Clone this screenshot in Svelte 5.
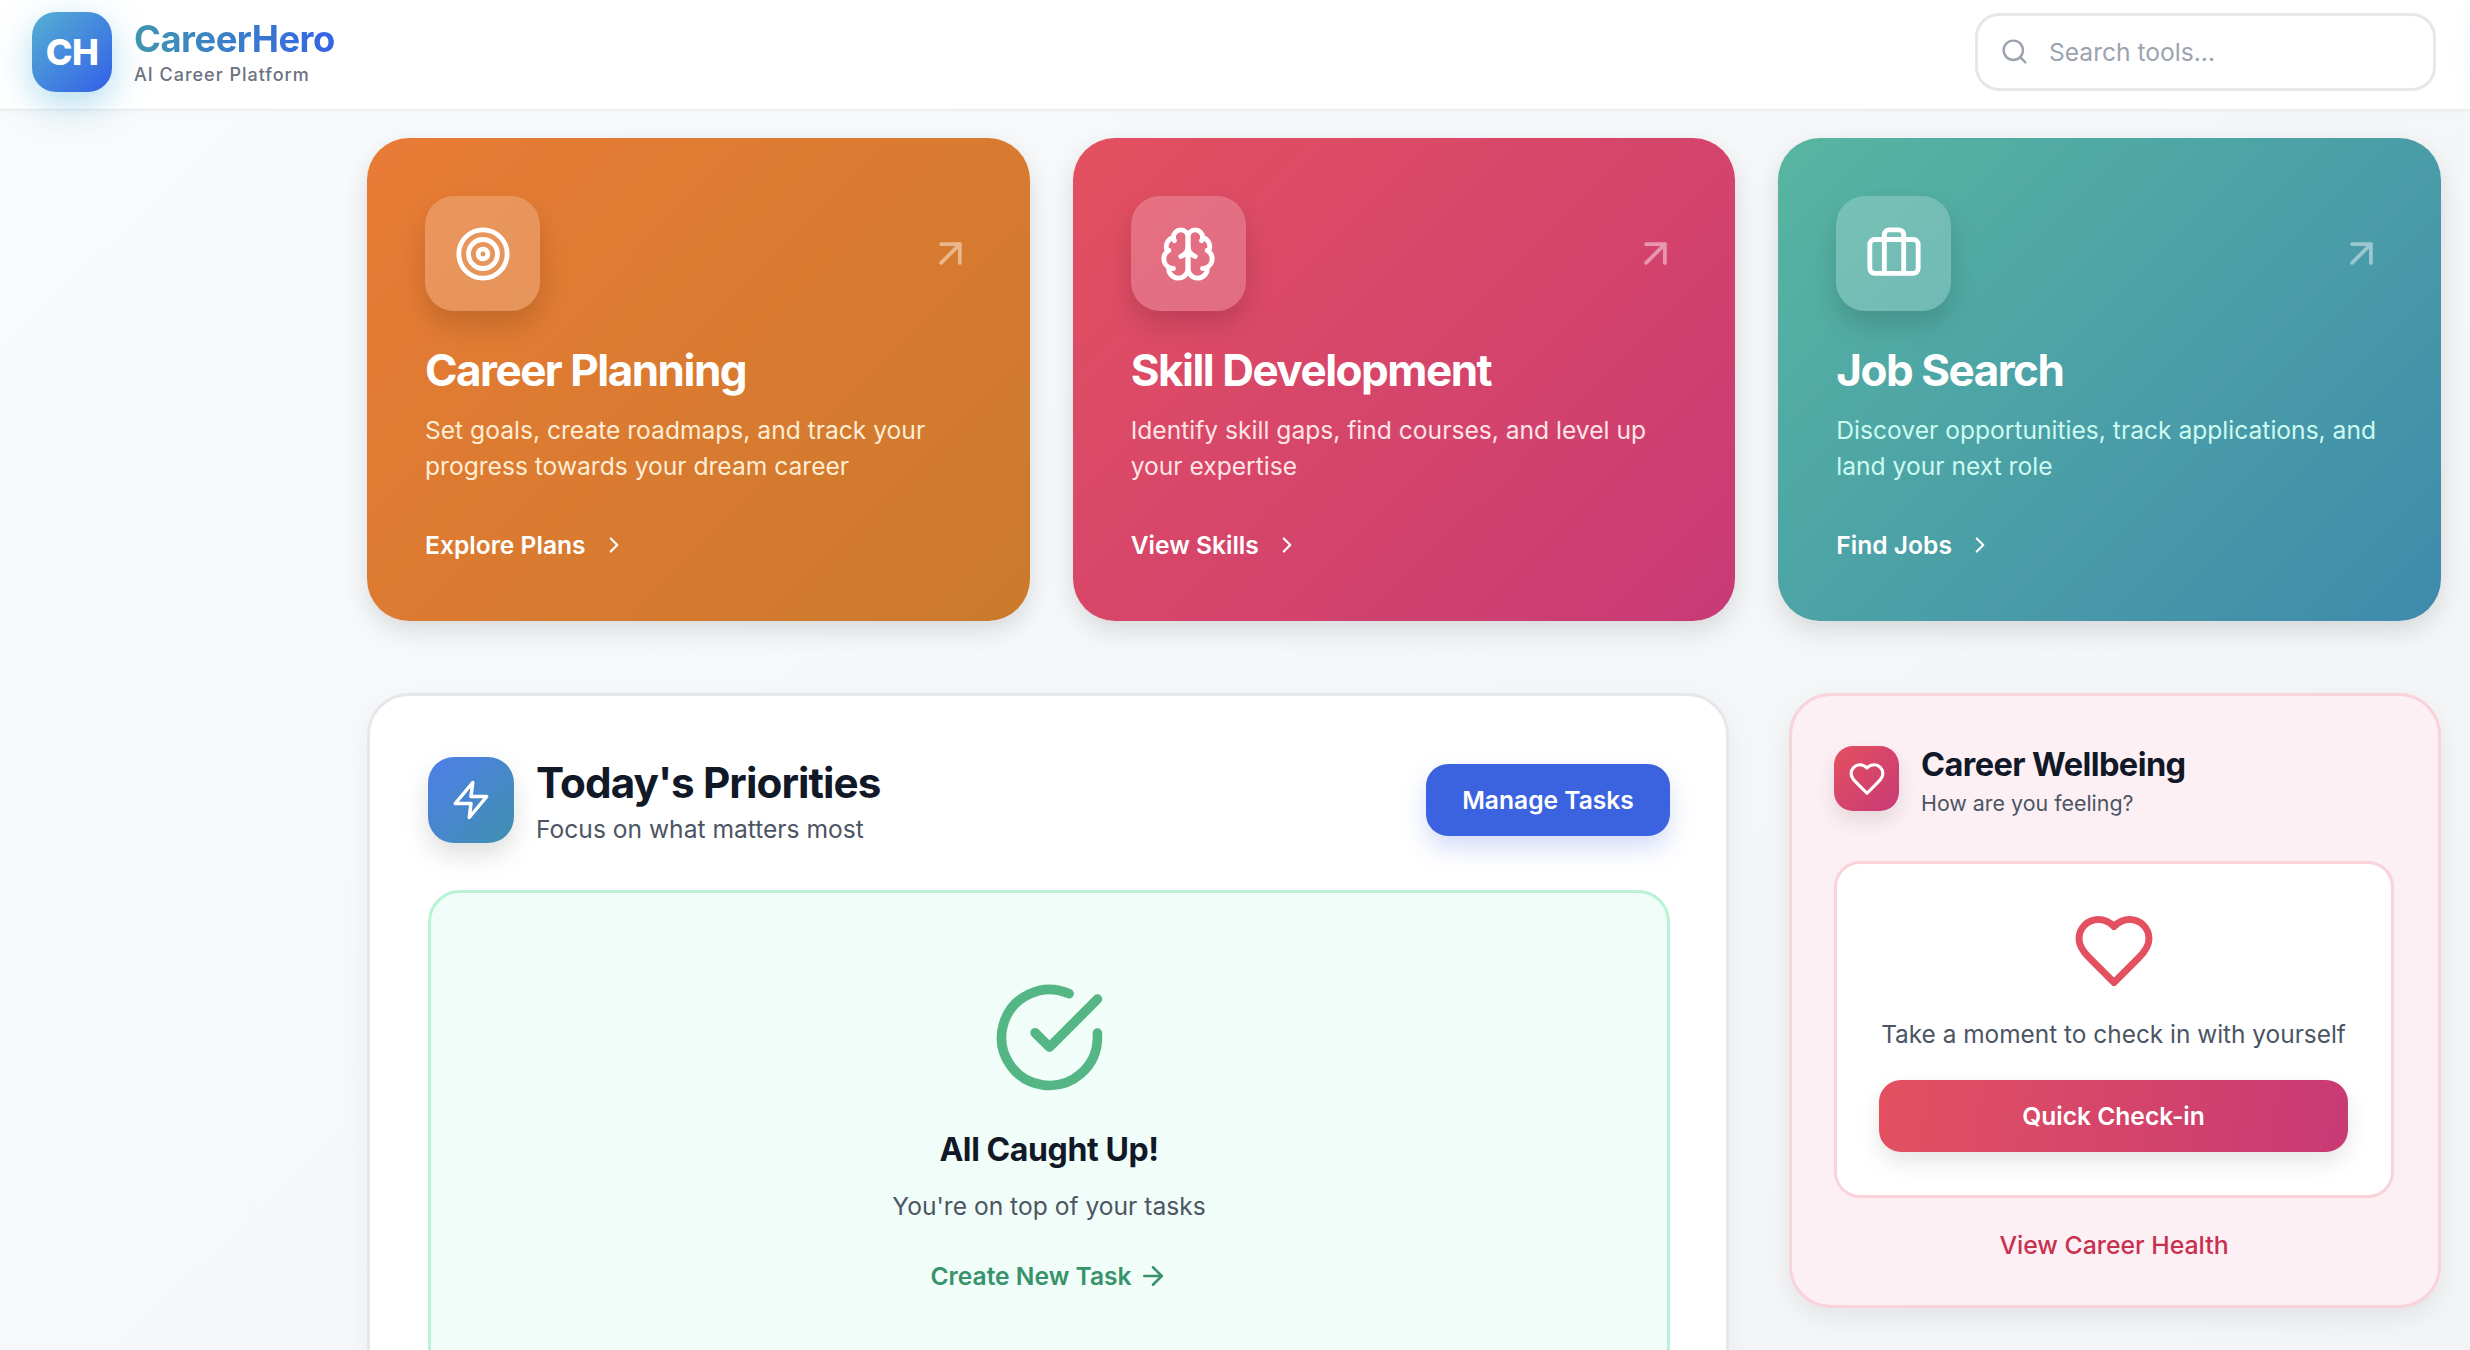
<script>
  const cards = [
    {
      cls: 'orange',
      title: 'Career Planning',
      text: 'Set goals, create roadmaps, and track your progress towards your dream career',
      link: 'Explore Plans',
      icon: '<circle cx="12" cy="12" r="10"/><circle cx="12" cy="12" r="6"/><circle cx="12" cy="12" r="2"/>'
    },
    {
      cls: 'pink',
      title: 'Skill Development',
      text: 'Identify skill gaps, find courses, and level up your expertise',
      link: 'View Skills',
      icon: '<path d="M12 5a3 3 0 1 0-5.997.125 4 4 0 0 0-2.526 5.77 4 4 0 0 0 .556 6.588A4 4 0 1 0 12 18Z"/><path d="M12 5a3 3 0 1 1 5.997.125 4 4 0 0 1 2.526 5.77 4 4 0 0 1-.556 6.588A4 4 0 1 1 12 18Z"/><path d="M15 13a4.5 4.5 0 0 1-3-4 4.5 4.5 0 0 1-3 4"/><path d="M17.599 6.5a3 3 0 0 0 .399-1.375"/><path d="M6.003 5.125A3 3 0 0 0 6.401 6.5"/><path d="M3.477 10.896a4 4 0 0 1 .585-.396"/><path d="M19.938 10.5a4 4 0 0 1 .585.396"/><path d="M6 18a4 4 0 0 1-1.967-.516"/><path d="M19.967 17.484A4 4 0 0 1 18 18"/>'
    },
    {
      cls: 'teal',
      title: 'Job Search',
      text: 'Discover opportunities, track applications, and land your next role',
      link: 'Find Jobs',
      icon: '<rect x="2" y="6" width="20" height="14" rx="2"/><path d="M16 20V4a2 2 0 0 0-2-2h-4a2 2 0 0 0-2 2v16"/>'
    }
  ];
  const heart = 'M19 14c1.49-1.46 3-3.21 3-5.5A5.5 5.5 0 0 0 16.5 3c-1.76 0-3 .5-4.5 2-1.5-1.5-2.74-2-4.5-2A5.5 5.5 0 0 0 2 8.5c0 2.3 1.5 4.05 3 5.5l7 7Z';
</script>

<div class="page">
  <header class="topbar">
    <div class="brand">
      <div class="logo">CH</div>
      <div>
        <div class="brand-name"><span>CareerHero</span></div>
        <div class="brand-sub">AI Career Platform</div>
      </div>
    </div>
    <div class="search">
      <svg width="29" height="29" viewBox="0 0 24 24"><circle cx="11" cy="11" r="8"/><path d="m21 21-4.3-4.3"/></svg>
      <input type="text" placeholder="Search tools..." />
    </div>
  </header>

  <main class="content">
    <section class="cards">
      {#each cards as card}
        <article class="card {card.cls}">
          <div class="card-top">
            <div class="card-icon">
              <svg width="58" height="58" viewBox="0 0 24 24">{@html card.icon}</svg>
            </div>
            <svg class="corner" width="45" height="45" viewBox="0 0 24 24"><path d="M7 7h10v10"/><path d="M7 17 17 7"/></svg>
          </div>
          <h2>{card.title}</h2>
          <p>{card.text}</p>
          <a class="card-link" href="#top">
            {card.link}
            <svg width="26" height="26" viewBox="0 0 24 24"><path d="m9 18 6-6-6-6"/></svg>
          </a>
        </article>
      {/each}
    </section>

    <section class="lower">
      <div class="panel">
        <div class="panel-head">
          <div class="panel-title">
            <div class="zap">
              <svg width="42" height="42" viewBox="0 0 24 24"><path d="M13 2 3 14h9l-1 8 10-12h-9l1-8z"/></svg>
            </div>
            <div>
              <h2>Today's Priorities</h2>
              <p>Focus on what matters most</p>
            </div>
          </div>
          <button class="manage">Manage Tasks</button>
        </div>
        <div class="done">
          <svg class="done-check" width="115" height="115" viewBox="0 0 24 24"><path d="M22 11.08V12a10 10 0 1 1-5.93-9.14"/><path d="M22 4 12 14.01l-3-3"/></svg>
          <h3>All Caught Up!</h3>
          <p>You're on top of your tasks</p>
          <a class="create" href="#top">
            Create New Task
            <svg width="30" height="30" viewBox="0 0 24 24"><path d="M5 12h14"/><path d="m12 5 7 7-7 7"/></svg>
          </a>
        </div>
      </div>

      <aside class="wellbeing">
        <div class="well-head">
          <div class="well-icon">
            <svg width="38" height="38" viewBox="0 0 24 24"><path d={heart}/></svg>
          </div>
          <div>
            <h3>Career Wellbeing</h3>
            <p>How are you feeling?</p>
          </div>
        </div>
        <div class="checkin">
          <svg class="big-heart" width="84" height="84" viewBox="0 0 24 24"><path d={heart}/></svg>
          <p>Take a moment to check in with yourself</p>
          <button class="quick">Quick Check-in</button>
        </div>
        <a class="health" href="#top">View Career Health</a>
      </aside>
    </section>
  </main>
</div>

<style>
  :global(body) {
    margin: 0;
    background: linear-gradient(135deg, #f9fafb, #f3f4f6);
    font-family: Inter, "Noto Sans", sans-serif;
    overflow: hidden;
  }
  svg {
    fill: none;
    stroke: currentColor;
    stroke-width: 2;
    stroke-linecap: round;
    stroke-linejoin: round;
    flex: none;
    display: block;
  }
  h2, h3, p {
    margin: 0;
  }
  a {
    text-decoration: none;
  }
  button {
    font-family: inherit;
    border: 0;
    color: #fff;
    font-size: 24.6px;
    font-weight: 600;
    height: 72px;
    border-radius: 22px;
  }

  .page {
    height: 1350px;
    overflow: hidden;
  }

  .topbar {
    position: relative;
    z-index: 2;
    display: flex;
    justify-content: space-between;
    align-items: center;
    height: 109px;
    padding: 0 34px 0 32px;
    background: #fff;
    border-bottom: 1px solid #e7e9ed;
    box-shadow: 0 1px 4px rgba(0, 0, 0, 0.04);
  }
  /* glow of something that sits past the right edge */
  .topbar::after {
    content: "";
    position: absolute;
    top: 14px;
    right: -72px;
    width: 60px;
    height: 80px;
    border-radius: 24px;
    box-shadow: 0 0 34px rgba(70, 175, 215, 0.2);
  }
  .brand {
    display: flex;
    align-items: center;
    gap: 22px;
    margin-top: -5px;
  }
  .logo {
    width: 80px;
    height: 80px;
    border-radius: 24px;
    display: flex;
    align-items: center;
    justify-content: center;
    color: #fff;
    font-size: 36px;
    font-weight: 800;
    letter-spacing: -0.5px;
    background: linear-gradient(135deg, #55b0d2, #3360e8);
    box-shadow: 0 12px 36px rgba(70, 175, 215, 0.42);
  }
  .brand-name {
    padding-top: 1px;
    font-size: 36.4px;
    font-weight: 700;
    line-height: 44px;
    letter-spacing: -0.5px;
  }
  .brand-sub {
    font-size: 18px;
    font-weight: 500;
    line-height: 26px;
    margin-top: 1px;
    letter-spacing: 1px;
    color: #6b7280;
  }
  .brand-name span {
    background: linear-gradient(100deg, #3f97ae, #3563e6);
    -webkit-background-clip: text;
    background-clip: text;
    color: transparent;
  }
  .search {
    display: flex;
    align-items: center;
    gap: 20px;
    width: 461px;
    height: 78px;
    box-sizing: border-box;
    padding: 0 22px;
    margin-top: -6px;
    background: #fff;
    border: 3px solid #e5e7eb;
    border-radius: 24px;
    color: #9ca3af;
  }
  .search input {
    flex: 1;
    min-width: 0;
    border: 0;
    outline: 0;
    padding: 0;
    font-family: inherit;
    font-size: 24.6px;
    color: #374151;
  }
  .search input::placeholder {
    color: #9ca3af;
    opacity: 1;
  }

  .content {
    padding: 28px 29px 0 367px;
  }
  .cards {
    display: grid;
    grid-template-columns: repeat(3, 1fr);
    gap: 43px;
  }
  .card {
    padding: 58px;
    border-radius: 42px;
    color: #fff;
    box-shadow: 0 10px 26px rgba(0, 0, 0, 0.12);
  }
  .orange {
    background: linear-gradient(135deg, #e97b35, #ca7a2b);
  }
  .orange p {
    color: #ffedd5;
  }
  .pink {
    background: linear-gradient(135deg, #e3505f, #c83a76);
  }
  .pink p {
    color: #ffe4e6;
  }
  .teal {
    background: linear-gradient(135deg, #57b6a1, #3f8aac);
  }
  .teal p {
    color: #ccfbf1;
  }
  .card-top {
    display: flex;
    justify-content: space-between;
    align-items: center;
  }
  .card-icon {
    width: 115px;
    height: 115px;
    border-radius: 29px;
    display: flex;
    align-items: center;
    justify-content: center;
    background: rgba(255, 255, 255, 0.2);
    box-shadow: 0 14px 26px rgba(0, 0, 0, 0.14);
  }
  .corner {
    margin-right: -1px;
    opacity: 0.45;
  }
  .card h2 {
    margin-top: 30px;
    font-size: 44px;
    font-weight: 700;
    line-height: 58px;
    letter-spacing: -1.5px;
  }
  .card p {
    margin-top: 13px;
    font-size: 24.6px;
    line-height: 36.2px;
  }
  .card-link {
    display: flex;
    align-items: center;
    gap: 15px;
    margin-top: 42.6px;
    color: #fff;
    font-size: 24.6px;
    font-weight: 600;
    line-height: 36px;
  }

  .lower {
    display: grid;
    grid-template-columns: 1362px 1fr;
    gap: 60px;
    align-items: start;
    margin-top: 72px;
  }
  .panel {
    padding: 61px 56px 60px 58px;
    background: #fff;
    border: 3px solid #e5e7eb;
    border-radius: 42px;
    box-shadow: 0 8px 26px rgba(0, 0, 0, 0.05);
  }
  .panel-head {
    display: flex;
    justify-content: space-between;
    align-items: center;
    height: 86px;
    margin-bottom: 47px;
  }
  .panel-title {
    display: flex;
    align-items: center;
    gap: 22px;
  }
  .zap {
    width: 86px;
    height: 86px;
    border-radius: 26px;
    display: flex;
    align-items: center;
    justify-content: center;
    color: #fff;
    background: linear-gradient(135deg, #4f7eea, #3f90ae);
    box-shadow: 0 12px 26px rgba(0, 0, 0, 0.13);
  }
  .panel-title h2 {
    padding-top: 3px;
    font-size: 42.2px;
    font-weight: 700;
    line-height: 52px;
    letter-spacing: -0.9px;
    color: #111827;
  }
  .panel-title p {
    margin-top: 2px;
    font-size: 24.6px;
    line-height: 36px;
    color: #4b5563;
  }
  .manage {
    width: 244px;
    background: #3b63e0;
    box-shadow: 0 12px 24px rgba(59, 99, 224, 0.22);
  }
  .done {
    display: flex;
    flex-direction: column;
    align-items: center;
    padding: 87px 0;
    background: #f0fdf8;
    border: 3px solid #b9f2d4;
    border-radius: 32px;
  }
  .done-check {
    color: #55b685;
  }
  .done h3 {
    margin-top: 32px;
    font-size: 32px;
    font-weight: 700;
    line-height: 46px;
    letter-spacing: -0.4px;
    color: #111827;
  }
  .done p {
    margin-top: 15px;
    font-size: 24.6px;
    line-height: 36px;
    color: #4b5563;
  }
  .create {
    display: flex;
    align-items: center;
    gap: 6px;
    margin-top: 34px;
    font-size: 24.6px;
    font-weight: 600;
    line-height: 36px;
    color: #38936a;
  }

  .wellbeing {
    min-width: 0;
    padding: 46px 44px 42px 42px;
    background: #fdf0f4;
    border: 3px solid #f9d2da;
    border-radius: 42px;
    box-shadow: 0 10px 26px rgba(0, 0, 0, 0.07);
  }
  .well-head {
    display: flex;
    align-items: flex-start;
    gap: 22px;
  }
  .well-icon {
    width: 65px;
    height: 65px;
    margin-top: 4px;
    border-radius: 19px;
    display: flex;
    align-items: center;
    justify-content: center;
    color: #fff;
    background: linear-gradient(135deg, #e3505f, #c83a76);
    box-shadow: 0 10px 20px rgba(0, 0, 0, 0.1);
  }
  .well-head h3 {
    padding-top: 1px;
    font-size: 32.6px;
    font-weight: 700;
    line-height: 42px;
    letter-spacing: -0.6px;
    color: #111827;
  }
  .well-head p {
    margin-top: 3px;
    font-size: 21.4px;
    line-height: 30px;
    color: #4b5563;
  }
  .checkin {
    display: flex;
    flex-direction: column;
    align-items: center;
    margin-top: 43px;
    padding: 45px 43px 43px 42px;
    background: #fff;
    border: 3px solid #f9d2da;
    border-radius: 26px;
  }
  .big-heart {
    color: #e35060;
  }
  .checkin p {
    margin-top: 23px;
    font-size: 24.4px;
    line-height: 36px;
    color: #4b5563;
    white-space: nowrap;
  }
  .quick {
    width: 100%;
    margin-top: 28px;
    background: linear-gradient(100deg, #e35060, #c73a75);
    box-shadow: 0 10px 22px rgba(0, 0, 0, 0.1);
  }
  .health {
    display: block;
    margin-top: 29px;
    text-align: center;
    font-size: 24.8px;
    font-weight: 500;
    line-height: 36px;
    color: #c93050;
  }
</style>
